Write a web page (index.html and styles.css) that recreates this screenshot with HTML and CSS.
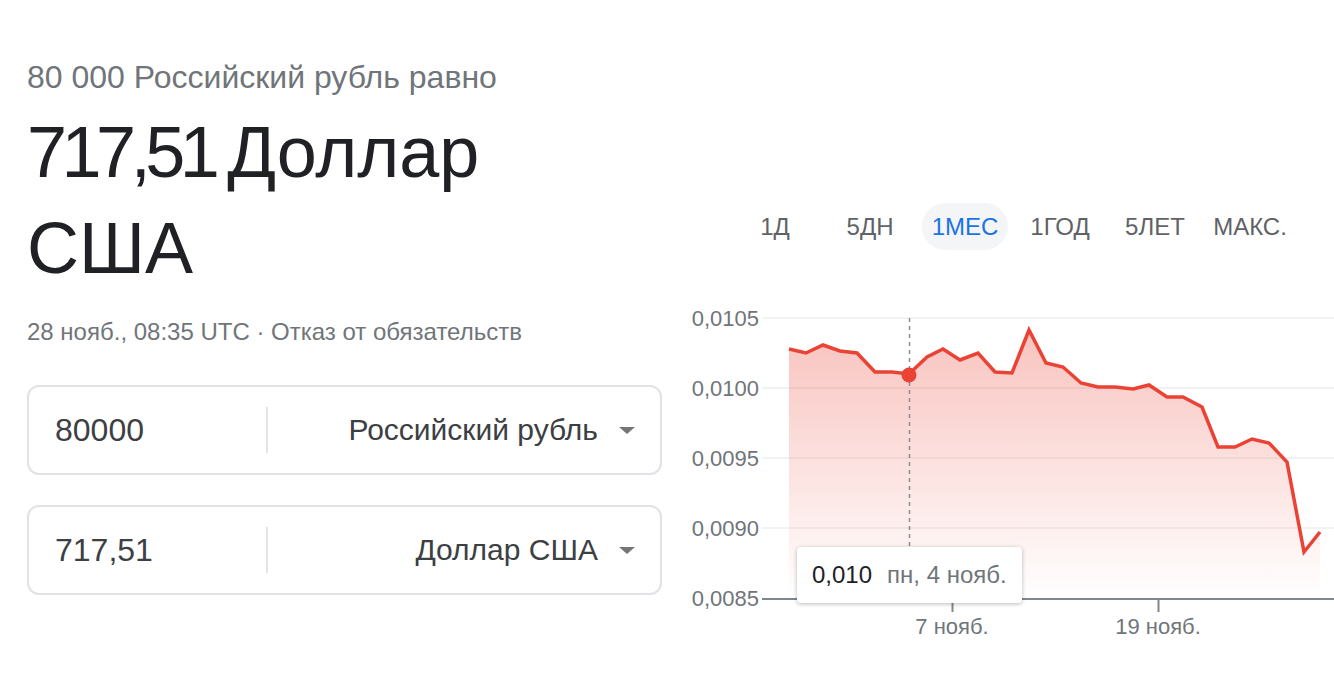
FILE: index.html
```html
<!DOCTYPE html>
<html lang="ru">
<head>
<meta charset="utf-8">
<title>Конвертер валют</title>
<link rel="stylesheet" href="styles.css">
</head>
<body>
<div class="page">
  <section class="left">
    <div class="equals">80 000 Российский рубль равно</div>
    <div class="result"><span class="num">717,51</span> <span class="cur">Доллар</span> <span class="cur">США</span></div>
    <div class="meta">28 нояб., 08:35 UTC · Отказ от обязательств</div>
    <div class="box">
      <div class="amount">80000</div>
      <div class="sep"></div>
      <div class="currency"><span>Российский рубль</span><i class="caret"></i></div>
    </div>
    <div class="box second">
      <div class="amount">717,51</div>
      <div class="sep"></div>
      <div class="currency"><span>Доллар США</span><i class="caret"></i></div>
    </div>
  </section>
  <section class="right">
    <div class="tabs">
      <div class="tab">1Д</div>
      <div class="tab">5ДН</div>
      <div class="tab active">1МЕС</div>
      <div class="tab">1ГОД</div>
      <div class="tab">5ЛЕТ</div>
      <div class="tab">МАКС.</div>
    </div>
    <div class="chart">
      <svg class="plot" width="671" height="400" viewBox="663 250 671 400">
        <defs>
          <linearGradient id="fillg" gradientUnits="userSpaceOnUse" x1="0" y1="328" x2="0" y2="598">
            <stop offset="0" stop-color="#ea4335" stop-opacity="0.32"/>
            <stop offset="1" stop-color="#ea4335" stop-opacity="0"/>
          </linearGradient>
        </defs>
        <g class="grid">
          <line x1="762" y1="318" x2="1334" y2="318"/>
          <line x1="762" y1="388" x2="1334" y2="388"/>
          <line x1="762" y1="458" x2="1334" y2="458"/>
          <line x1="762" y1="528" x2="1334" y2="528"/>
        </g>
        <g class="ylabels">
          <text x="759" y="326">0,0105</text>
          <text x="759" y="396">0,0100</text>
          <text x="759" y="466">0,0095</text>
          <text x="759" y="536">0,0090</text>
          <text x="759" y="606">0,0085</text>
        </g>
        <polygon class="area" points="789,349 806,353 823,345 840,351 857,353 875,372 892,372 909,374 927,357 943,349 960,360 978,353 995,372 1012,373 1029,330 1046,363 1063,367 1081,383 1098,387 1115,387 1133,389 1149,385 1167,397 1183,397 1202,407 1218,447 1235,447 1252,439 1269,443 1287,462 1304,552 1320,532 1320,598 789,598"/>
        <polyline class="line" points="789,349 806,353 823,345 840,351 857,353 875,372 892,372 909,374 927,357 943,349 960,360 978,353 995,372 1012,373 1029,330 1046,363 1063,367 1081,383 1098,387 1115,387 1133,389 1149,385 1167,397 1183,397 1202,407 1218,447 1235,447 1252,439 1269,443 1287,462 1304,552 1320,532"/>
        <line class="cursor" x1="909.5" y1="318" x2="909.5" y2="598"/>
        <circle class="dot" cx="909" cy="375" r="7.5"/>
        <line class="axis" x1="762" y1="599" x2="1334" y2="599"/>
        <line class="tick" x1="952.5" y1="599" x2="952.5" y2="612"/>
        <line class="tick" x1="1158.5" y1="599" x2="1158.5" y2="612"/>
        <text class="xlabel" x="952" y="634">7 нояб.</text>
        <text class="xlabel" x="1158" y="634">19 нояб.</text>
      </svg>
      <div class="tooltip"><span class="tv">0,010</span><span class="td">пн, 4 нояб.</span></div>
    </div>
  </section>
</div>
</body>
</html>
```

FILE: styles.css
```css
html, body {
  margin: 0;
  padding: 0;
  background: #ffffff;
}
body {
  font-family: "Liberation Sans", Arial, sans-serif;
  color: #202124;
  width: 1334px;
  height: 688px;
  overflow: hidden;
}
.page {
  display: flex;
  align-items: flex-start;
}
.left {
  box-sizing: border-box;
  width: 663px;
  padding-left: 27px;
  padding-top: 59px;
}
.equals {
  font-size: 32px;
  line-height: 36px;
  color: #70757a;
}
.result {
  margin-top: 9px;
  font-size: 72px;
  line-height: 96px;
  color: #202124;
  width: 500px;
  word-spacing: -7px;
}
.result .num {
  letter-spacing: -5.5px;
}
.meta {
  margin-top: 20px;
  font-size: 24px;
  line-height: 32px;
  color: #70757a;
}
.box {
  box-sizing: border-box;
  margin-top: 37px;
  width: 635px;
  height: 90px;
  border: 2px solid #e0e2e6;
  border-radius: 12px;
  display: flex;
  align-items: center;
}
.box.second {
  margin-top: 30px;
}
.amount {
  box-sizing: border-box;
  flex: 0 0 237px;
  padding-left: 26px;
  font-size: 32px;
  color: #3c4043;
}
.sep {
  flex: 0 0 2px;
  height: 46px;
  background: #e3e4e6;
}
.currency {
  flex: 1;
  display: flex;
  justify-content: flex-end;
  align-items: center;
  padding-right: 25px;
  font-size: 30px;
  color: #3c4043;
}
.caret {
  margin-left: 21px;
  width: 0;
  height: 0;
  border-left: 8.5px solid transparent;
  border-right: 8.5px solid transparent;
  border-top: 7px solid #757575;
}
.right {
  width: 671px;
  flex: 0 0 671px;
}
.tabs {
  margin-top: 203px;
  padding-left: 69px;
  display: flex;
  gap: 9px;
}
.tab {
  width: 86px;
  height: 47px;
  border-radius: 24px;
  display: flex;
  align-items: center;
  justify-content: center;
  font-size: 24px;
  color: #5f6368;
}
.tab.active {
  background: #f3f5f6;
  color: #1a73e8;
}
.chart {
  position: relative;
  height: 400px;
}
.plot {
  display: block;
}
.grid line {
  stroke: #f1f2f3;
  stroke-width: 2;
}
.ylabels text {
  font-family: "Liberation Sans", Arial, sans-serif;
  font-size: 22px;
  fill: #70757a;
  text-anchor: end;
}
.area {
  fill: url(#fillg);
}
.line {
  fill: none;
  stroke: #ea4335;
  stroke-width: 3.5;
  stroke-linejoin: miter;
}
.cursor {
  stroke: #8a8d91;
  stroke-width: 1.5;
  stroke-dasharray: 4 4;
}
.dot {
  fill: #ea4335;
}
.axis {
  stroke: #80868b;
  stroke-width: 2;
}
.tick {
  stroke: #80868b;
  stroke-width: 2;
}
.xlabel {
  font-family: "Liberation Sans", Arial, sans-serif;
  font-size: 22px;
  fill: #70757a;
  text-anchor: middle;
}
.tooltip {
  position: absolute;
  left: 134px;
  top: 297px;
  box-sizing: border-box;
  width: 225px;
  height: 56px;
  padding-left: 15px;
  background: #ffffff;
  border-radius: 4px;
  box-shadow: 0 1px 4px rgba(0, 0, 0, 0.28);
  display: flex;
  align-items: center;
  font-size: 24px;
}
.tv {
  color: #202124;
}
.td {
  margin-left: 15px;
  color: #70757a;
}
```
